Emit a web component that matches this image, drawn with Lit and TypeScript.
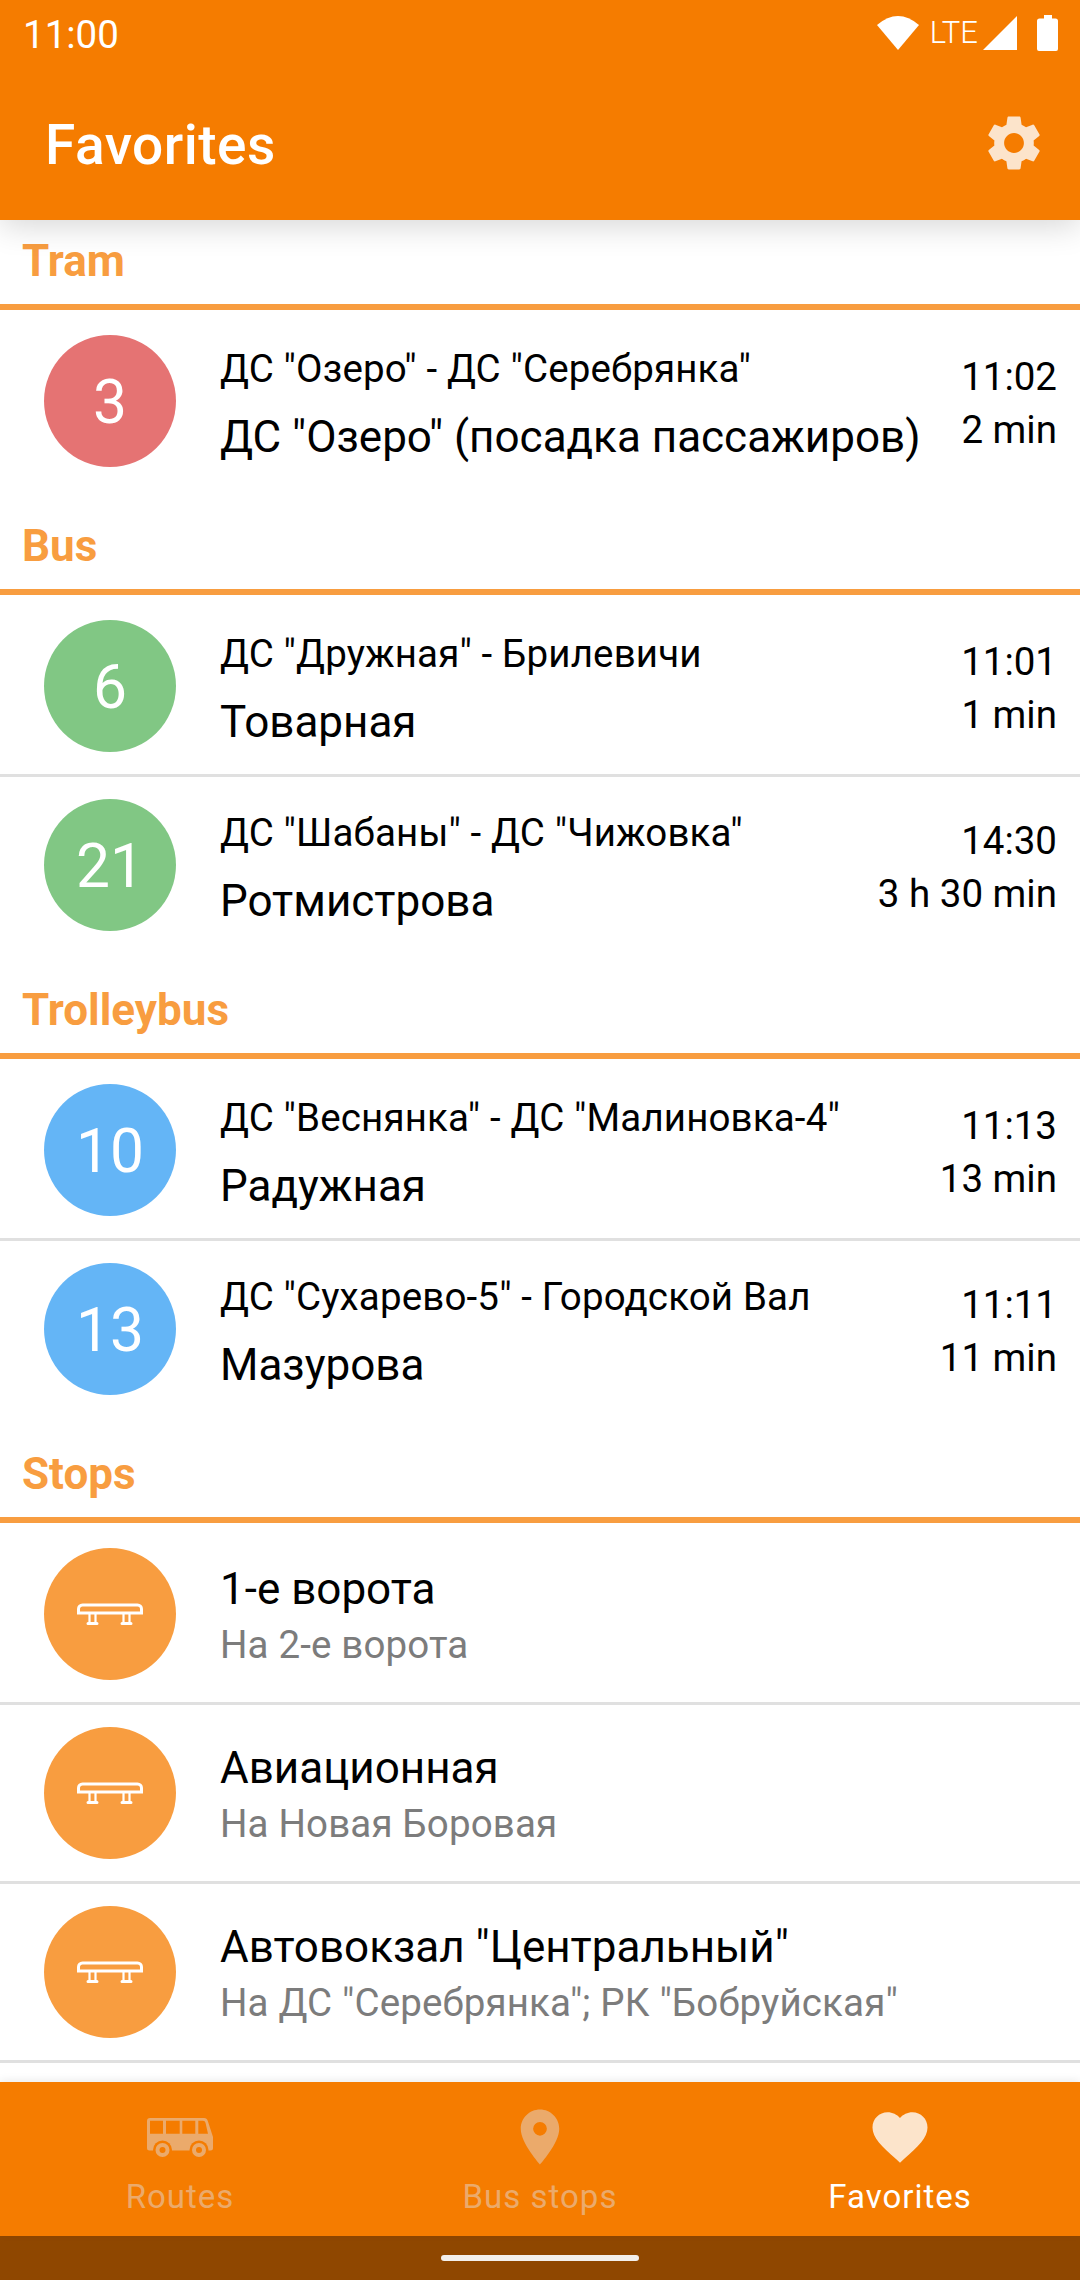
import { LitElement, html, css, svg } from "lit";
import { customElement } from "lit/decorators.js";

type Route = { n: string; color: string; dir: string; stop: string; time: string; wait: string };
type Stop = { name: string; sub: string };

const TRAM: Route[] = [
  { n: "3", color: "red", dir: 'ДС "Озеро" - ДС "Серебрянка"', stop: 'ДС "Озеро" (посадка пассажиров)', time: "11:02", wait: "2 min" },
];
const BUS: Route[] = [
  { n: "6", color: "green", dir: 'ДС "Дружная" - Брилевичи', stop: "Товарная", time: "11:01", wait: "1 min" },
  { n: "21", color: "green", dir: 'ДС "Шабаны" - ДС "Чижовка"', stop: "Ротмистрова", time: "14:30", wait: "3 h 30 min" },
];
const TROLLEY: Route[] = [
  { n: "10", color: "blue", dir: 'ДС "Веснянка" - ДС "Малиновка-4"', stop: "Радужная", time: "11:13", wait: "13 min" },
  { n: "13", color: "blue", dir: 'ДС "Сухарево-5" - Городской Вал', stop: "Мазурова", time: "11:11", wait: "11 min" },
];
const STOPS: Stop[] = [
  { name: "1-е ворота", sub: "На 2-е ворота" },
  { name: "Авиационная", sub: "На Новая Боровая" },
  { name: 'Автовокзал "Центральный"', sub: 'На ДС "Серебрянка"; РК "Бобруйская"' },
];

const bench = svg`<svg class="bench" viewBox="0 0 66 22" width="66" height="22">
  <path d="M1.500 10V6A4 4 0 0 1 5.500 2h55A4 4 0 0 1 64.500 6V10z" fill="none" stroke="#fff" stroke-width="3"/>
  <path d="M12.500 10v10M18.500 10v10M46.500 10v10M52.500 10v10" fill="none" stroke="#fff" stroke-width="2.200"/>
  <path d="M11 20.500h9M45 20.500h9" fill="none" stroke="#fff" stroke-width="3" stroke-linecap="round"/>
</svg>`;

const GEAR = "M19.14 12.94c.04-.3.06-.61.06-.94 0-.32-.02-.64-.07-.94l2.03-1.58c.18-.14.23-.41.12-.61l-1.92-3.32c-.12-.22-.37-.29-.59-.22l-2.39.96c-.5-.38-1.03-.7-1.62-.94l-.36-2.54c-.04-.24-.24-.41-.48-.41h-3.84c-.24 0-.43.17-.47.41l-.36 2.54c-.59.24-1.13.57-1.62.94l-2.39-.96c-.22-.08-.47 0-.59.22L2.74 8.87c-.12.21-.08.47.12.61l2.03 1.58c-.05.3-.09.63-.09.94s.02.64.07.94l-2.03 1.58c-.18.14-.23.41-.12.61l1.92 3.32c.12.22.37.29.59.22l2.39-.96c.5.38 1.03.7 1.62.94l.36 2.54c.05.24.24.41.48.41h3.84c.24 0 .44-.17.47-.41l.36-2.54c.59-.24 1.13-.56 1.62-.94l2.39.96c.22.08.47 0 .59-.22l1.92-3.32c.12-.22.07-.47-.12-.61l-2.01-1.58zM12 15.6c-1.98 0-3.6-1.62-3.6-3.6s1.62-3.6 3.6-3.6 3.6 1.62 3.6 3.6-1.62 3.6-3.6 3.6z";

@customElement("app-root")
export class AppRoot extends LitElement {
  static styles = css`
    :host {
      display: flex;
      flex-direction: column;
      width: 1080px;
      height: 2280px;
      overflow: hidden;
      background: #fff;
      font-family: Roboto, "Noto Sans", sans-serif;
      color: #000;
    }
    .top {
      background: #f57c00;
      color: #fff;
      position: relative;
      z-index: 2;
      box-shadow: 0 6px 30px rgba(0, 0, 0, 0.16);
    }
    .status {
      height: 66px;
      display: flex;
      align-items: center;
      padding: 0 22px 0 23px;
    }
    .clock { font-size: 38.5px; line-height: 66px; flex: 1; padding-top: 3px; }
    .status-icons { display: flex; align-items: center; gap: 0; }
    .lte { font-size: 31px; font-weight: 300; margin: 0 5px 0 11px; line-height: 40px; }
    .toolbar {
      height: 154px;
      display: flex;
      align-items: center;
      padding: 0 33px 0 45px;
    }
    .title { flex: 1; font-size: 55px; font-weight: 500; padding-top: 3px; letter-spacing: 0.5px; }
    .gear { fill: #fce4cb; display: block; }
    .list { flex: 1; min-height: 0; overflow: hidden; }
    .head {
      height: 82px;
      padding-bottom: 2px;
      border-bottom: 6px solid #f89d40;
      margin-top: 16px;
      padding-left: 22px;
      padding-right: 22px;
      color: #f89d40;
      font-size: 44px;
      font-weight: 700;
      display: flex;
      align-items: center;
    }
    .head.first { margin-top: 0; }
    .rows { padding-top: 3px; }
    .row {
      height: 176px;
      display: flex;
      align-items: center;
      padding: 0 23px 0 44px;
      gap: 44px;
    }
    .row + .row { border-top: 3px solid #e0e0e0; }
    .row.last { border-bottom: 3px solid #e0e0e0; }
    .circle {
      flex: none;
      width: 132px;
      height: 132px;
      border-radius: 50%;
      display: flex;
      align-items: center;
      justify-content: center;
      color: #fff;
      font-size: 60.5px;
      line-height: 66px;
      padding-top: 3px;
      box-sizing: border-box;
    }
    .red { background: #e57373; }
    .green { background: #81c784; }
    .blue { background: #64b5f6; }
    .orange { background: #f89d40; padding-top: 0; }
    .bench { display: block; }
    .main { flex: 1; min-width: 0; white-space: nowrap; padding-top: 8px; }
    .dir { font-size: 38.5px; line-height: 50px; letter-spacing: 0.15px; }
    .name { font-size: 44px; line-height: 58px; margin-top: 14px; }
    .right { text-align: right; font-size: 38.5px; line-height: 53px; white-space: nowrap; padding-top: 4px; }
    .stops-main { padding-top: 3px; }
    .stop-name { font-size: 44px; line-height: 56px; }
    .stop-sub { font-size: 38.5px; line-height: 50px; color: #7c7c7c; letter-spacing: 0.15px; margin-top: 3px; }
    .nav {
      height: 154px;
      background: #f57c00;
      display: flex;
      box-shadow: 0 -2px 8px rgba(0, 0, 0, 0.08);
      position: relative;
    }
    .tab {
      flex: 1;
      display: flex;
      flex-direction: column;
      align-items: center;
      padding-top: 22px;
      font-size: 33px;
      color: #ebaa6b;
      fill: #ebaa6b;
    }
    .tab svg { display: block; }
    .tab.on { color: #fff; fill: #fce4cb; }
    .tab span { line-height: 40px; margin-top: 7px; letter-spacing: 1px; }
    .syscolor { height: 44px; background: #8f4700; display: flex; align-items: center; justify-content: center; }
    .handle { width: 198px; height: 6px; border-radius: 3px; background: #f3efeb; }
  `;

  private routeRows(items: Route[]) {
    return html`<div class="rows">
      ${items.map(
        (r) => html`<div class="row">
          <div class="circle ${r.color}">${r.n}</div>
          <div class="main">
            <div class="dir">${r.dir}</div>
            <div class="name">${r.stop}</div>
          </div>
          <div class="right"><div>${r.time}</div><div>${r.wait}</div></div>
        </div>`
      )}
    </div>`;
  }

  render() {
    return html`
      <div class="top">
        <div class="status">
          <div class="clock">11:00</div>
          <div class="status-icons">
            <svg width="42" height="36" viewBox="0 0 42 36"><path d="M21 35L0 10Q21 -8 42 10z" fill="#fff"/></svg>
            <span class="lte">LTE</span>
            <svg width="34" height="34" viewBox="0 0 34 34"><path d="M0 34L34 0v34z" fill="#fff"/></svg>
            <svg style="margin-left:20px" width="21" height="36" viewBox="0 0 21 36"><path d="M7 0h8v3.500h3.500A2.500 2.500 0 0 1 21 6v28a2 2 0 0 1-2 2H2a2 2 0 0 1-2-2V6a2.500 2.500 0 0 1 2.500-2.500H7z" fill="#fff"/></svg>
          </div>
        </div>
        <div class="toolbar">
          <div class="title">Favorites</div>
          <svg class="gear" width="66" height="66" viewBox="0 0 24 24"><path d="${GEAR}"/></svg>
        </div>
      </div>
      <div class="list">
        <div class="head first">Tram</div>
        ${this.routeRows(TRAM)}
        <div class="head">Bus</div>
        ${this.routeRows(BUS)}
        <div class="head">Trolleybus</div>
        ${this.routeRows(TROLLEY)}
        <div class="head">Stops</div>
        <div class="rows">
          ${STOPS.map(
            (s, i) => html`<div class="row ${i === STOPS.length - 1 ? "last" : ""}">
              <div class="circle orange">${bench}</div>
              <div class="main stops-main">
                <div class="stop-name">${s.name}</div>
                <div class="stop-sub">${s.sub}</div>
              </div>
            </div>`
          )}
        </div>
      </div>
      <div class="nav">
        <div class="tab">
          <svg width="66" height="66" viewBox="0 0 66 66">
            <path fill-rule="evenodd" d="M3 14h54q3 0 3.800 3L66 33v11q0 2.500-2.500 2.500H2.500Q0 46.500 0 44V17q0-3 3-3zM3 16.700v13h13v-13zM19 16.700v13h13.700v-13zM35.300 16.700v13h13v-13zM51.300 16.700v13h9.700l-2.500-11q-.5-2-2.500-2z"/>
            <g>
              <circle cx="15.500" cy="46" r="9.500" fill="#f57c00"/>
              <circle cx="52" cy="46" r="9.500" fill="#f57c00"/>
              <circle cx="15.500" cy="46" r="7"/>
              <circle cx="52" cy="46" r="7"/>
              <circle cx="15.500" cy="46" r="3" fill="#f57c00"/>
              <circle cx="52" cy="46" r="3" fill="#f57c00"/>
            </g>
          </svg>
          <span>Routes</span>
        </div>
        <div class="tab">
          <svg width="66" height="66" viewBox="0 0 24 24"><path d="M12 2C8.130 2 5 5.130 5 9c0 5.250 7 13 7 13s7-7.750 7-13c0-3.870-3.130-7-7-7zm0 9.500a2.500 2.500 0 0 1 0-5 2.500 2.500 0 0 1 0 5z"/></svg>
          <span>Bus stops</span>
        </div>
        <div class="tab on">
          <svg width="66" height="66" viewBox="0 0 24 24"><path d="M12 21.350l-1.450-1.320C5.400 15.360 2 12.280 2 8.500 2 5.420 4.420 3 7.500 3c1.740 0 3.410.81 4.500 2.090C13.090 3.810 14.760 3 16.500 3 19.580 3 22 5.420 22 8.500c0 3.780-3.400 6.860-8.550 11.540L12 21.350z"/></svg>
          <span>Favorites</span>
        </div>
      </div>
      <div class="syscolor"><div class="handle"></div></div>
    `;
  }
}
